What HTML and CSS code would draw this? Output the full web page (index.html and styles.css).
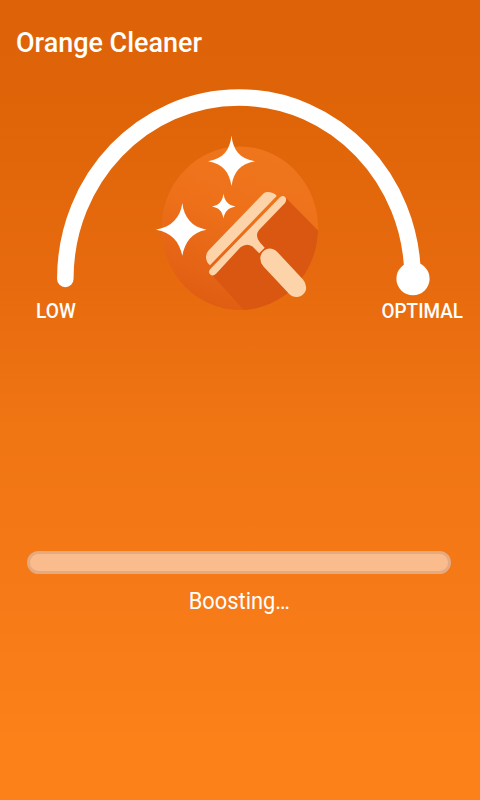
FILE: index.html
```html
<!DOCTYPE html>
<html lang="en">
<head>
<meta charset="utf-8">
<title>Orange Cleaner</title>
<link rel="stylesheet" href="styles.css">
</head>
<body>
<main class="screen">
  <h1 class="title"><span class="narrow">Orange Cleaner</span></h1>
  <svg class="gauge" viewBox="0 80 480 220" aria-hidden="true">
    <defs>
      <linearGradient id="disc" x1="0.6" y1="0" x2="0.3" y2="1">
        <stop offset="0" stop-color="#ef761d"/>
        <stop offset="0.4" stop-color="#ee711a"/>
        <stop offset="1" stop-color="#df5c12"/>
      </linearGradient>
      <clipPath id="disc-clip"><ellipse cx="239.8" cy="228.3" rx="78.3" ry="81.8"/></clipPath>
    </defs>
    <path class="arc" d="M65.3 279C65.3 178.5 143.3 97.5 239 97.5S412.700 178.5 412.700 279"/>
    <circle class="knob" cx="413" cy="278.7" r="16.6"/>
    <ellipse cx="239.8" cy="228.3" rx="78.3" ry="81.8" fill="url(#disc)"/>
    <path class="shadow" clip-path="url(#disc-clip)" d="M286 198L340 253V330H262L213 276Z"/>
    <g class="tool">
      <path d="M263.5 193.5Q266 191.500 270 192.300Q274.500 192.800 276.700 196L210 265.200Q206 262 206 257Q206 253.500 208.500 250.500Z"/>
      <path d="M280 197.200Q283 195 285.300 197.200Q287.200 199.800 285 203L259 230Q254.500 236 260 242.500L264.700 247.800L259.200 253.300L252.500 246.500Q246.500 242.500 240.500 247.200L216 273.800Q213 277 210.300 274.500Q207.800 272 210.300 269Z"/>
      <path d="M264.100 250.600Q268.500 247.200 273.200 249.200Q275.800 250.200 277.800 252.500L303 279.500Q307.500 285 305.600 291Q303 296.500 297 297Q292.500 297.200 289 293.700L263.500 266.500Q260 262.500 260.300 257.500Q260.700 253.500 264.100 250.600Z"/>
    </g>
    <g class="sparkles">
      <path d="M231.500 135.500C233 150 240 159 255 161.300C240 164 234 171.500 231.500 186C229 171.500 223 164 208 161.300C223 159 230 150 231.500 135.500Z"/>
      <path d="M182.300 203C184 217.500 192 227 206.500 229.700C192 232.500 185 241.500 182.300 255.800C179.500 241.500 171.500 232.500 156 229.700C171.500 227 180.500 217.500 182.300 203Z"/>
      <path d="M223.500 193.700C224.500 201 228 205 235.500 206.500C228 208 224.700 211.500 223.500 218.500C222.300 211.500 219.500 208 212 206.500C219.500 205 222.500 201 223.500 193.700Z"/>
    </g>
  </svg>
  <div class="labels"><span class="low">LOW</span><span class="optimal">OPTIMAL</span></div>
  <div class="progress"></div>
  <p class="status"><span class="narrow">Boosting…</span></p>
</main>
</body>
</html>
```
FILE: styles.css
```css
* { box-sizing: border-box; }
body { margin: 0; }
.screen {
  width: 480px;
  height: 800px;
  overflow: hidden;
  display: flex;
  flex-direction: column;
  font-family: Roboto, sans-serif;
  color: #fff;
  background: linear-gradient(#de6308 0, #df6408 100px, #e76b0e 280px, #f07513 430px, #f67a17 600px, #fd8119 740px, #fd8119 800px);
}
.title {
  margin: 0;
  height: 80px;
  padding: 27px 0 0 16px;
  font-size: 28.5px;
  line-height: 32px;
  font-weight: 500;
}
.narrow { display: inline-block; }
.title .narrow { transform: scaleX(0.946); transform-origin: left; }
.status .narrow { transform: scaleX(0.95); }
.gauge { display: block; flex: none; width: 480px; height: 220px; overflow: visible; }
.arc { fill: none; stroke: #fff; stroke-width: 16.5; stroke-linecap: round; }
.knob, .sparkles { fill: #fff; }
.shadow { fill: #da5711; }
.tool { fill: #fdd4aa; }
.labels {
  display: flex;
  justify-content: space-between;
  padding: 0 17px 0 36px;
  font-size: 19.5px;
  line-height: 23px;
  font-weight: 500;
}
.low { transform: scaleX(0.98); transform-origin: left; }
.optimal { transform: scaleX(0.97); transform-origin: right; }
.progress {
  flex: none;
  width: 424px;
  height: 23px;
  margin: 228px 0 0 27px;
  border: 3px solid #e5aa80;
  border-radius: 12px;
  background: #fbbc8d;
}
.status {
  margin: 14px 2px 0 0;
  text-align: center;
  font-size: 23px;
  line-height: 28px;
}
```
